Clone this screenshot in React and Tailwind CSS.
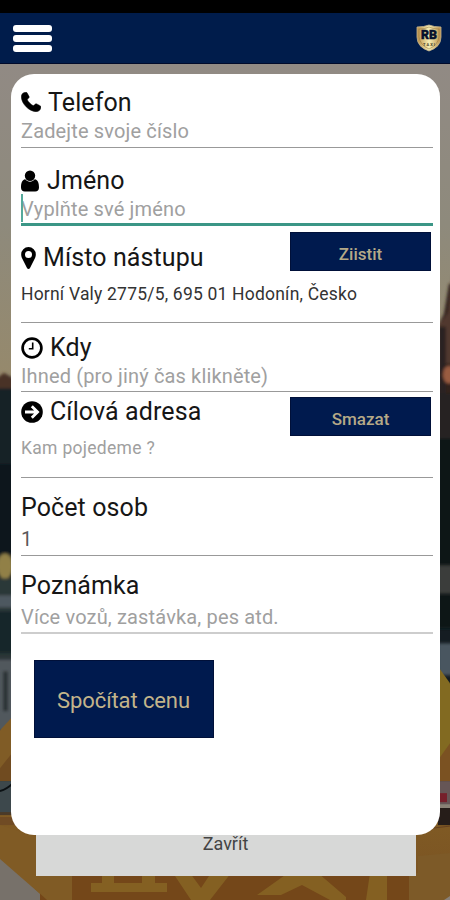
import React, { useState } from 'react';

function PhoneIcon() {
  return (
    <svg viewBox="0 0 20 20" className="w-5 h-5 -mt-0.5">
      <path d="M4.6 0.2 C2.2 0.4 0.3 2 0.3 5 C0.7 12 8 19.3 15 19.7 C18 19.7 19.9 17.6 19.9 14.8 C19.9 14 19 13.6 15.6 11.9 C14.2 11.2 13.2 14 12 13.6 C10 12.6 7.2 9.8 6.4 8 C6.1 6.8 8.8 6 8.1 4.6 L6 0.7 C5.7 0.2 5.2 0.1 4.6 0.2 Z" stroke="#000" strokeWidth="0.5" />
    </svg>
  );
}

function UserIcon() {
  return (
    <svg viewBox="0 0 18 21" className="w-[18px] h-[22px] -mt-px">
      <ellipse cx="9" cy="5.2" rx="5.2" ry="5.2" />
      <path d="M4.2 8.8 C1 9.2 0 13 0 17 C0 19.8 1.5 21 3.8 21 H14.2 C16.5 21 18 19.8 18 17 C18 13 17 9.2 13.8 8.8 C11.2 12 6.8 12 4.2 8.8 Z" />
    </svg>
  );
}

function PinIcon() {
  return (
    <svg viewBox="0 0 15 22" className="w-[15px] h-[22px] -mt-px">
      <path fillRule="evenodd" d="M7.5 0 A7.3 7.3 0 0 1 14.8 7.4 C14.8 9.2 14.3 10.4 13.8 11.4 L9 21 C8.4 22.2 6.6 22.2 6 21 L1.2 11.4 C0.7 10.4 0.2 9.2 0.2 7.4 A7.3 7.3 0 0 1 7.5 0 Z M7.5 4 A3.5 3.5 0 1 0 7.5 11 A3.5 3.5 0 1 0 7.5 4 Z" />
    </svg>
  );
}

function ClockIcon() {
  return (
    <svg viewBox="0 0 22 22" className="w-[22px] h-[22px]" fill="none" stroke="#000">
      <circle cx="11" cy="11" r="9.4" strokeWidth="2.7" />
      <path d="M11.7 5.5 V11.8 H7.8" strokeWidth="1.6" />
    </svg>
  );
}

function ArrowIcon() {
  return (
    <svg viewBox="0 0 22 22" className="w-[22px] h-[22px] -mt-px" fill="none">
      <circle cx="11" cy="11" r="10.8" fill="#000" />
      <path d="M4 11 H16 M10.8 5.2 L16.6 11 L10.8 16.8" stroke="#fff" strokeWidth="2.8" />
    </svg>
  );
}

function Logo() {
  return (
    <svg viewBox="0 0 26 28" className="w-[26px] h-7">
      <defs>
        <linearGradient id="gold" x1="0" y1="0" x2="1" y2="0">
          <stop offset="0" stopColor="#b98d45" />
          <stop offset="0.5" stopColor="#f7efb5" />
          <stop offset="1" stopColor="#b98c48" />
        </linearGradient>
      </defs>
      <path d="M1 3 Q8 3 13 1 Q18 3 25 3 V13 Q25 23 13 27 Q1 23 1 13 Z" fill="url(#gold)" stroke="#c8b890" strokeWidth="0.8" />
      <path d="M3 5 Q9 5 13 3 Q17 5 23 5 V13 Q22 21 13 25 Q4 21 3 13 Z" fill="none" stroke="#8d713c" strokeWidth="0.5" />
      <text x="13" y="15" textAnchor="middle" fontFamily="Roboto, sans-serif" fontWeight="900" fontSize="12" textLength="16" lengthAdjust="spacingAndGlyphs" fill="#06102c" stroke="#06102c" strokeWidth="0.5">RB</text>
      <text x="13" y="21.5" textAnchor="middle" fontFamily="Roboto, sans-serif" fontWeight="700" fontSize="4" textLength="12" fill="#4b4228">TAXI</text>
    </svg>
  );
}

// Dimmed street photo with the taxi behind the form
function Backdrop() {
  return (
    <svg viewBox="0 0 450 837" preserveAspectRatio="none" className="absolute inset-0 w-full h-full">
      <defs>
        <linearGradient id="sky" x1="0" y1="0" x2="0" y2="1">
          <stop offset="0" stopColor="#918a84" />
          <stop offset="0.5" stopColor="#8e8a7c" />
          <stop offset="1" stopColor="#96896b" />
        </linearGradient>
        <linearGradient id="car" x1="0" y1="0" x2="0" y2="1">
          <stop offset="0" stopColor="#805b24" />
          <stop offset="1" stopColor="#7a5223" />
        </linearGradient>
        <filter id="soft" x="-10%" y="-10%" width="120%" height="120%">
          <feGaussianBlur stdDeviation="1.5" />
        </filter>
      </defs>
      <rect width="450" height="837" fill="#151c22" />
      <rect width="450" height="320" fill="url(#sky)" />
      <g filter="url(#soft)">
        <path d="M-5 318 L5 310 L20 318 V500 H-5 Z" fill="#152428" />
        <path d="M-5 316 L4 309 L14 316 V325 H-5 Z" fill="#493026" />
        <rect x="-5" y="400" width="25" height="90" fill="#11181d" />
        <ellipse cx="5" cy="503" rx="8" ry="13" fill="#918047" />
        <rect x="-5" y="515" width="25" height="80" fill="#2c3937" />
        <rect x="-5" y="532" width="25" height="12" fill="#4d5860" />
        <rect x="-5" y="548" width="25" height="42" fill="#18272b" />
        <rect x="-5" y="596" width="25" height="72" fill="#51585d" />
        <rect x="3" y="608" width="5" height="40" fill="#2a3034" />
        <path d="M438 262 L444 250 L449 220 H456 V480 H438 Z" fill="#30231f" />
        <path d="M438 262 L448 249 L455 195 V300 H438 Z" fill="#51382d" />
        <rect x="438" y="263" width="8" height="100" fill="#292322" />
        <ellipse cx="449" cy="311" rx="6" ry="9" fill="#9a5b40" />
        <rect x="438" y="330" width="16" height="50" fill="#282220" />
        <rect x="438" y="375" width="16" height="190" fill="#0c1419" />
        <rect x="438" y="502" width="16" height="28" fill="#3b3c3b" />
        <rect x="438" y="580" width="16" height="32" fill="#4a5660" />
      </g>
      <path d="M0 667 L12 654 V718 H0 Z" fill="#805c26" />
      <path d="M0 705 L12 690 V718 H0 Z" fill="#704b20" />
      <rect y="718" width="14" height="33" fill="#3d484c" />
      <path d="M0 728 Q7 726 13 720" fill="none" stroke="#0b1013" strokeWidth="2" />
      <path d="M440 606 L450 620 V718 H440 Z" fill="#826a21" />
      <path d="M440 694 L450 680 V718 H440 Z" fill="#7b5222" />
      <rect x="438" y="718" width="12" height="23" fill="#665656" />
      <rect x="438" y="730" width="9" height="9" fill="#76202b" />
      <rect x="438" y="741" width="12" height="4" fill="#898276" />
      <rect y="750" width="450" height="87" fill="url(#car)" />
      <rect x="438" y="745" width="12" height="17" fill="#261d19" />
      <rect y="749" width="20" height="3" fill="#4b3a28" />
      <rect y="754" width="40" height="8" fill="#704b24" />
      <path d="M0 762 L42 776 V838 H0 Z" fill="#805b25" />
      <path d="M0 796 L47 837 H0 Z" fill="#77716a" />
      <rect x="40" y="810" width="376" height="27" fill="#744719" />
      <path d="M35 810 H72 V837 H47 L35 826 Z" fill="#805b25" />
      <path d="M102 810 H114 V820 H142 V810 H155 V820 H167 V829 H91 V820 H102 Z" fill="#846022" />
      <path d="M173 810 H190 L201 825 L211 810 H231 L210 837 H191 Z" fill="#846022" />
      <path d="M288 810 H318 L346 834 V837 H330 L302 822 L281 832 H257 Z" fill="#846022" />
      <path d="M370 810 H387 V837 H366 Z" fill="#846022" />
      <path d="M418 793 L450 790 V837 H409 V810 H418 Z" fill="#7d5a28" />
      <path d="M416 767 L450 763" stroke="#654020" />
      <path d="M444 837 L450 833 V837 Z" fill="#88817a" />
    </svg>
  );
}

function Label({ icon, children }) {
  return (
    <div className="flex items-center h-[30px] text-[25px] tracking-[0.1px] text-[#161616] whitespace-nowrap">
      {icon}
      {children}
    </div>
  );
}

function Action({ children }) {
  return (
    <button className="absolute right-0.5 w-[141px] h-[39px] pt-1.5 bg-[#001a4e] border border-[#001039] text-[17px] font-medium leading-none text-[#b5a987]">
      {children}
    </button>
  );
}

const input = 'block w-full h-[26px] bg-transparent outline-none text-[20px] tracking-[0.15px] placeholder:text-[#a0a0a0] placeholder:opacity-100';

function App() {
  const [phone, setPhone] = useState('');
  const [name, setName] = useState('');
  const [count, setCount] = useState('1');
  const [note, setNote] = useState('');

  return (
    <div className="w-[450px] h-[900px] flex flex-col overflow-hidden bg-black font-[Roboto,sans-serif]">
      <header className="h-16 shrink-0 border-t-[13px] border-t-black border-b border-b-[#000a2a] bg-[#001c4b] flex items-center justify-between pl-[13px] pr-2">
        <button aria-label="Menu" className="flex flex-col gap-[3px]">
          <span className="w-[39px] h-[7px] rounded-[3px] bg-white" />
          <span className="w-[39px] h-[7px] rounded-[3px] bg-white" />
          <span className="w-[39px] h-[7px] rounded-[3px] bg-white" />
        </button>
        <Logo />
      </header>

      <main className="relative flex-1">
        <Backdrop />
        <div className="relative flex flex-col items-center pt-[10px] pl-[11px] pr-[10px]">
          <form className="relative z-10 w-full h-[761px] bg-white rounded-[23px] pl-[10px] pr-[7px]" onSubmit={(e) => e.preventDefault()}>
            <div className="h-[74px] pt-[14px] border-b border-[#999]">
              <Label icon={<span className="w-[27px]"><PhoneIcon /></span>}>Telefon</Label>
              <input className={input} placeholder="Zadejte svoje číslo" value={phone} onChange={(e) => setPhone(e.target.value)} />
            </div>

            <div className="relative h-[78px] pt-[18px] border-b-[3px] border-[#3b9686]">
              <Label icon={<span className="w-[26px]"><UserIcon /></span>}>Jméno</Label>
              <input className={input} placeholder="Vyplňte své jméno" value={name} onChange={(e) => setName(e.target.value)} />
              <span className="absolute left-0 top-[46px] w-[2px] h-[28px] bg-[#55a99b]" />
            </div>

            <div className="relative h-[97px] pt-[6px] border-b border-[#999]">
              <Action>Ziistit</Action>
              <div className="pt-[11px]">
                <Label icon={<span className="w-[22px]"><PinIcon /></span>}>Místo nástupu</Label>
              </div>
              <p className="pt-[9px] text-[17.5px] leading-6 tracking-[0.2px] text-[#333] whitespace-nowrap">Horní Valy 2775/5, 695 01 Hodonín, Česko</p>
            </div>

            <div className="h-[69px] pt-[10px] border-b border-[#999]">
              <Label icon={<span className="w-[29px]"><ClockIcon /></span>}>Kdy</Label>
              <input className={input} placeholder="Ihned (pro jiný čas klikněte)" readOnly />
            </div>

            <div className="relative h-[86px] pt-[5px] border-b border-[#999]">
              <Action>Smazat</Action>
              <Label icon={<span className="w-[29px]"><ArrowIcon /></span>}>Cílová adresa</Label>
              <p className="pt-[9px] text-[17.5px] leading-6 tracking-[0.3px] text-[#a0a0a0]">Kam pojedeme ?</p>
            </div>

            <div className="h-[78px] pt-[15px] border-b border-[#999]">
              <Label>Počet osob</Label>
              <input className={input + ' mt-[3px] text-[#5a5a5a]'} value={count} onChange={(e) => setCount(e.target.value)} />
            </div>

            <div className="h-[78px] pt-[15px] border-b-2 border-[#cdcdcd]">
              <Label>Poznámka</Label>
              <input className={input + ' mt-[3px]'} placeholder="Více vozů, zastávka, pes atd." value={note} onChange={(e) => setNote(e.target.value)} />
            </div>

            <button className="mt-[26px] ml-[12.5px] w-[180px] h-[78px] pt-0.5 bg-[#001a4e] border border-[#001039] text-[22px] tracking-[-0.1px] text-[#c3b48a]">
              Spočítat cenu
            </button>
          </form>

          <button className="w-[380px] h-[41px] pb-[23px] bg-[#d7d8d7] text-[18px] leading-none text-[#444]">
            Zavřít
          </button>
        </div>
      </main>
    </div>
  );
}

export default App;
